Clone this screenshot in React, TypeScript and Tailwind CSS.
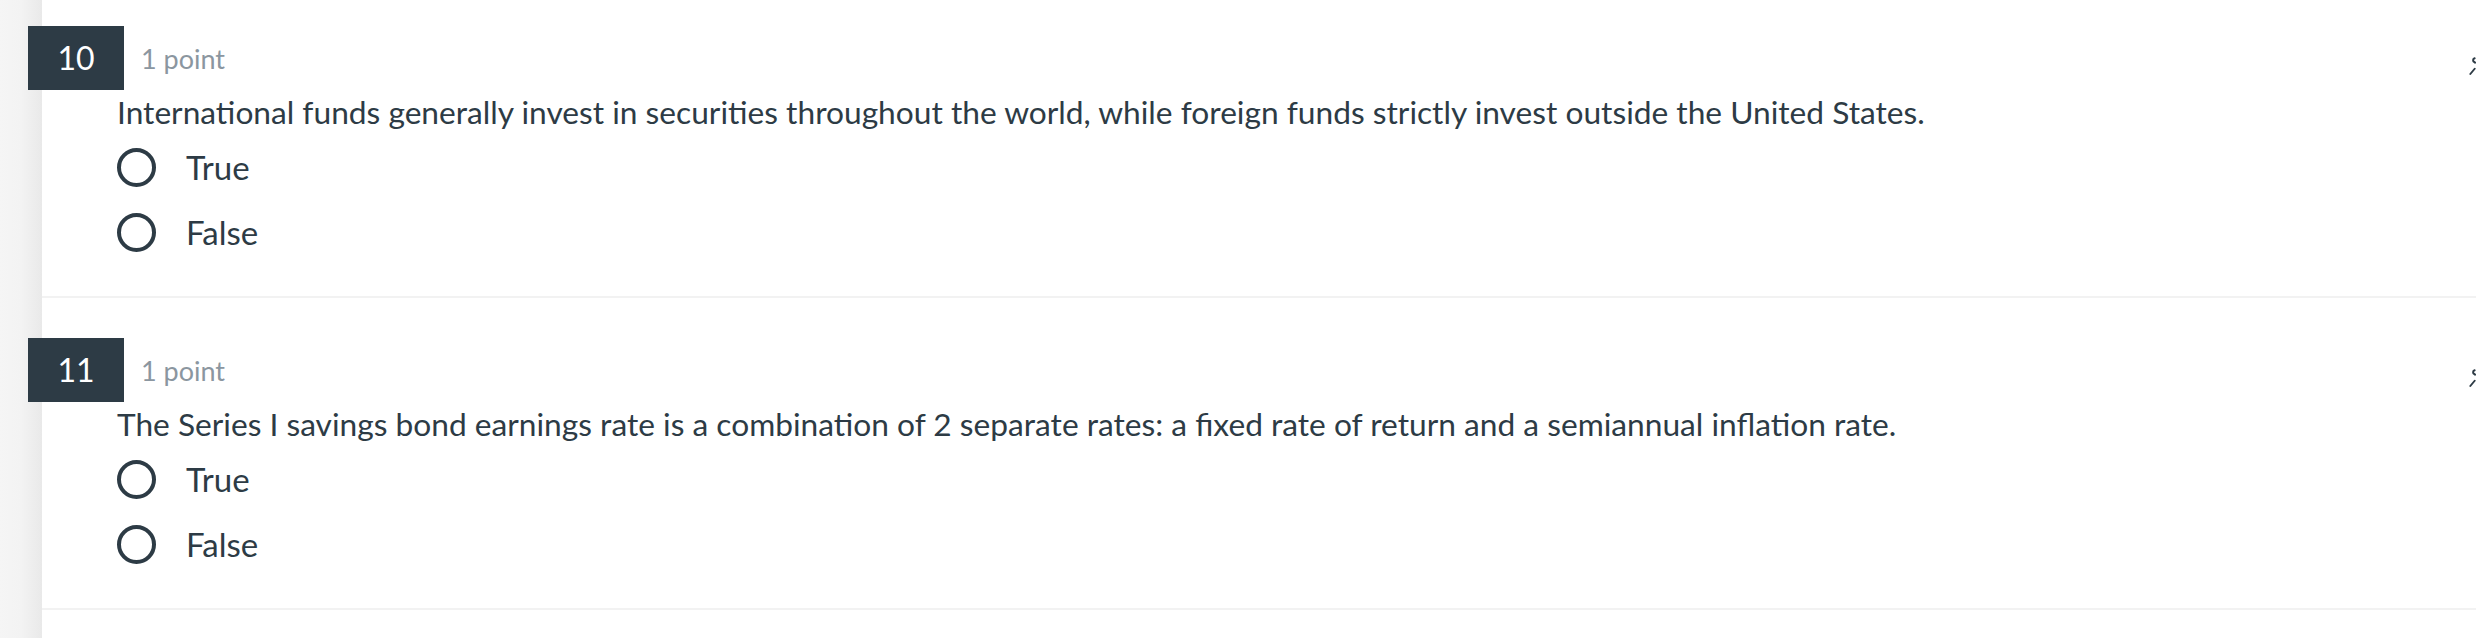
import React from 'react';

type Question = {
  num: number;
  text: string;
};

const questions: Question[] = [
  {
    num: 10,
    text: 'International funds generally invest in securities throughout the world, while foreign funds strictly invest outside the United States.',
  },
  {
    num: 11,
    text: 'The Series I savings bond earnings rate is a combination of 2 separate rates: a fixed rate of return and a semiannual inflation rate.',
  },
];

const PinIcon = () => (
  <svg width="8" height="24" viewBox="0 0 8 24" fill="none" stroke="#2d3b45" strokeWidth="2.2" strokeLinecap="round">
    <path d="M6.5 2 Q4 3 5 5.5 L7 7" />
    <path d="M6.5 14 L1.5 20" />
  </svg>
);

const Radio = ({ label }: { label: string }) => (
  <label className="flex h-[40px] items-center">
    <span className="h-[39px] w-[39px] shrink-0 rounded-full border-[4px] border-[#2d3b45]" />
    <span className="ml-[30px] text-[33px] leading-[40px] text-[#2d3b45]">{label}</span>
  </label>
);

const QuestionBlock = ({ q, first }: { q: Question; first: boolean }) => (
  <div className={`${first ? 'pt-[26px]' : 'pt-[40px]'} pb-[44px] border-b-2 border-[#f2f2f2]`}>
    <div className="flex items-center justify-between">
      <div className="flex items-center">
        <div className="-ml-[14px] flex h-[64px] w-[96px] items-center justify-center bg-[#2d3b45] text-[32px] leading-none text-white">
          {q.num}
        </div>
        <span className="ml-[17px] pt-[2px] text-[27px] text-[#8b96a0]">1 point</span>
      </div>
      <div className="mt-[18px] flex w-[7px] justify-start overflow-hidden">
        <PinIcon />
      </div>
    </div>
    <div className="pl-[75px]">
      <p className="mt-[3px] text-[31.7px] leading-[38px] text-[#2d3b45]">{q.text}</p>
      <div className="mt-[16px] flex flex-col gap-[25px]">
        <Radio label="True" />
        <Radio label="False" />
      </div>
    </div>
  </div>
);

export default function App() {
  return (
    <div className="flex h-[638px] w-full overflow-hidden bg-white" style={{ fontFamily: 'Lato, "Open Sans", sans-serif' }}>
      <div className="w-[42px] shrink-0 bg-gradient-to-r from-[#f5f5f5] via-[#f3f3f3] to-[#e9e9e9]" />
      <div className="flex-1">
        {questions.map((q, i) => (
          <QuestionBlock key={q.num} q={q} first={i === 0} />
        ))}
      </div>
    </div>
  );
}
